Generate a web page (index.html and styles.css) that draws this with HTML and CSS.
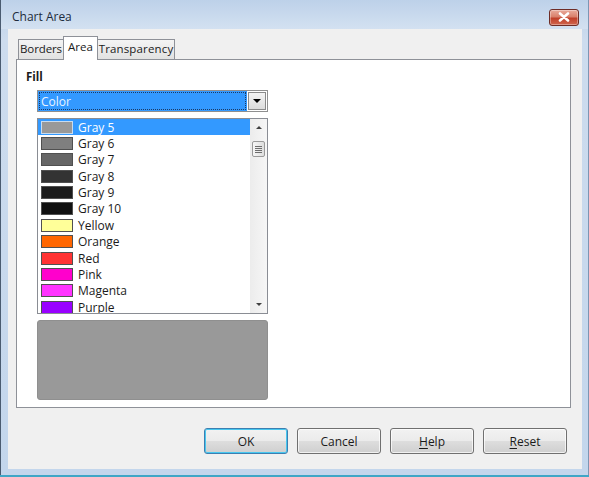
FILE: index.html
```html
<!DOCTYPE html>
<html>
<head>
<meta charset="utf-8">
<link rel="stylesheet" href="styles.css">
</head>
<body>
<div class="window">
  <div class="titlebar">
    <span class="title">Chart Area</span>
    <span class="close"><svg width="14" height="10" viewBox="0 0 14 10"><path d="M3 1.5 L11 8.5 M11 1.5 L3 8.5" stroke="#ffffff" stroke-width="2.6" stroke-linecap="round" fill="none"/></svg></span>
  </div>
  <div class="client">
    <div class="tabs">
      <div class="tab tab-borders">Borders</div>
      <div class="tab tab-area active">Area</div>
      <div class="tab tab-transp">Transparency</div>
    </div>
    <div class="panel">
      <div class="fill-label">Fill</div>
      <div class="indent">
        <div class="dropdown">
          <div class="dd-value"><span>Color</span></div>
          <div class="dd-btn"><span class="tri-down"></span></div>
        </div>
        <div class="listbox">
          <div class="rows">
            <div class="row selected"><span class="sw" style="background:#999999"></span>Gray 5</div>
            <div class="row"><span class="sw" style="background:#7f7f7f"></span>Gray 6</div>
            <div class="row"><span class="sw" style="background:#666666"></span>Gray 7</div>
            <div class="row"><span class="sw" style="background:#333333"></span>Gray 8</div>
            <div class="row"><span class="sw" style="background:#1c1c1c"></span>Gray 9</div>
            <div class="row"><span class="sw" style="background:#111111"></span>Gray 10</div>
            <div class="row"><span class="sw" style="background:#ffff99"></span>Yellow</div>
            <div class="row"><span class="sw" style="background:#ff6600"></span>Orange</div>
            <div class="row"><span class="sw" style="background:#ff3333"></span>Red</div>
            <div class="row"><span class="sw" style="background:#ff00cc"></span>Pink</div>
            <div class="row"><span class="sw" style="background:#ff33ff"></span>Magenta</div>
            <div class="row"><span class="sw" style="background:#9900ff"></span>Purple</div>
          </div>
          <div class="scrollbar">
            <div class="sb-arrow"><span class="tri-up"></span></div>
            <div class="sb-track">
              <div class="thumb"><i></i><i></i><i></i><i></i></div>
            </div>
            <div class="sb-arrow"><span class="tri-down small"></span></div>
          </div>
        </div>
        <div class="preview"></div>
      </div>
    </div>
    <div class="buttons">
      <div class="btn default">OK</div>
      <div class="btn">Cancel</div>
      <div class="btn"><u>H</u>elp</div>
      <div class="btn"><u>R</u>eset</div>
    </div>
  </div>
</div>
</body>
</html>
```

FILE: styles.css
```css
html, body {
  margin: 0;
  padding: 0;
}
body {
  width: 589px;
  height: 477px;
  overflow: hidden;
  background: #3fa6c6;
  font-family: "Open Sans", "Noto Sans", sans-serif;
  font-size: 11.5px;
  color: #1b1b1b;
}
.window {
  box-sizing: border-box;
  height: 475px;
  display: flex;
  flex-direction: column;
  background: linear-gradient(#bcd0e8 0px, #cddcee 40px, #c3d6ec 100%);
  border-left: 1px solid #4a5b70;
  border-right: 1px solid #7d96b3;
}
.titlebar {
  height: 29px;
  flex: none;
  display: flex;
  align-items: center;
  justify-content: space-between;
  padding: 0 9px 0 11px;
  background: linear-gradient(#bdd1e9, #d3e1f1);
}
.title {
  font-size: 12px;
  color: #1d2b3c;
  margin-top: 3px;
}
.close {
  width: 28px;
  height: 15px;
  margin-top: 5px;
  border: 1px solid #6e2d26;
  border-radius: 3px;
  background: linear-gradient(#e9ab9c 0%, #d9806b 45%, #c0402a 55%, #d0664e 100%);
  display: flex;
  align-items: center;
  justify-content: center;
  box-shadow: inset 0 0 0 1px rgba(255,255,255,0.35);
}
.close svg {
  display: block;
}
.client {
  flex: 1;
  margin: 0 6px 6px 7px;
  background: #f0f0f0;
  padding: 8px 11px 0 8px;
  display: flex;
  flex-direction: column;
}
.tabs {
  height: 22px;
  display: flex;
  align-items: flex-end;
  margin-left: 2px;
  position: relative;
  z-index: 1;
}
.tab {
  box-sizing: border-box;
  height: 20px;
  border: 1px solid #8e9198;
  border-bottom: none;
  background: linear-gradient(#f4f4f4, #e2e2e2);
  padding: 0;
  text-align: center;
  line-height: 18px;
  margin-left: -1px;
  white-space: nowrap;
}
.tab-borders {
  width: 46px;
  margin-left: 0;
  letter-spacing: -0.1px;
}
.tab-area {
  width: 35px;
}
.tab-transp {
  width: 78px;
  letter-spacing: 0.15px;
}
.tab.active {
  height: 24px;
  margin-bottom: -1px;
  background: #ffffff;
  line-height: 20px;
  position: relative;
}
.panel {
  box-sizing: border-box;
  height: 349px;
  flex: none;
  border: 1px solid #8e9198;
  background: #ffffff;
  padding: 9px 9px 0 9px;
}
.fill-label {
  font-weight: bold;
  font-size: 11.5px;
  line-height: 16px;
}
.indent {
  margin-left: 11px;
  width: 231px;
  margin-top: 5px;
}
.dropdown {
  box-sizing: border-box;
  height: 22px;
  display: flex;
  border: 1px solid #8f8f8f;
  background: #ffffff;
}
.dd-value {
  flex: 1;
  background: #3399ff;
  padding: 1px;
  display: flex;
}
.dd-value span {
  flex: 1;
  border: 1px dotted #1a3a66;
  color: #eaf4ff;
  padding-left: 1px;
  line-height: 17px;
  font-size: 12px;
}
.dd-btn {
  width: 16px;
  flex: none;
  margin: 1px;
  border: 1px solid #8a8a8a;
  background: linear-gradient(#f3f3f3, #dcdcdc);
  display: flex;
  align-items: center;
  justify-content: center;
}
.tri-down {
  width: 0;
  height: 0;
  border-left: 4px solid transparent;
  border-right: 4px solid transparent;
  border-top: 4px solid #000000;
}
.tri-down.small {
  border-left-width: 3px;
  border-right-width: 3px;
  border-top-width: 3px;
  border-top-color: #404040;
}
.tri-up {
  width: 0;
  height: 0;
  border-left: 3px solid transparent;
  border-right: 3px solid transparent;
  border-bottom: 3px solid #404040;
}
.listbox {
  box-sizing: border-box;
  margin-top: 6px;
  height: 196px;
  border: 1px solid #8a8d94;
  display: flex;
  overflow: hidden;
}
.rows {
  flex: 1;
  overflow: hidden;
}
.row {
  height: 16.36px;
  display: flex;
  align-items: center;
  font-size: 12px;
  white-space: nowrap;
}
.row.selected {
  background: #3399ff;
  color: #ffffff;
}
.sw {
  box-sizing: border-box;
  width: 32px;
  height: 13px;
  margin: 0 5px 0 3px;
  border: 1px solid #505050;
  flex: none;
}
.row.selected .sw {
  border-color: #c8dcf0;
}
.scrollbar {
  width: 17px;
  flex: none;
  background: linear-gradient(90deg, #ececec, #f6f6f6);
  display: flex;
  flex-direction: column;
}
.sb-arrow {
  height: 17px;
  display: flex;
  align-items: center;
  justify-content: center;
}
.sb-track {
  flex: 1;
  position: relative;
}
.thumb {
  box-sizing: border-box;
  margin: 5px 2px 0 2px;
  height: 16px;
  border: 1px solid #9a9a9a;
  border-radius: 2px;
  background: linear-gradient(90deg, #f6f6f6, #dedede);
  display: flex;
  flex-direction: column;
  justify-content: center;
  align-items: center;
  gap: 1px;
}
.thumb i {
  display: block;
  width: 7px;
  height: 1px;
  background: #6d6d6d;
}
.preview {
  box-sizing: border-box;
  margin-top: 6px;
  height: 80px;
  background: #999999;
  border: 1px solid #8f8f8f;
  border-radius: 3px;
}
.buttons {
  display: flex;
  justify-content: flex-end;
  gap: 9px;
  margin-top: 20px;
  margin-right: 4px;
}
.btn {
  box-sizing: border-box;
  width: 84px;
  height: 26px;
  border: 1px solid #707070;
  border-radius: 3px;
  background: linear-gradient(#f2f2f2 0%, #ebebeb 48%, #dddddd 52%, #cfcfcf 100%);
  display: flex;
  align-items: center;
  justify-content: center;
  font-size: 12px;
  color: #1b1b1b;
  box-shadow: inset 0 0 0 1px rgba(255,255,255,0.7);
}
.btn u {
  text-decoration: underline;
  text-underline-offset: 2px;
}
.btn.default {
  border-color: #3c7fb1;
  box-shadow: inset 0 0 0 1px #48c7ef;
}
```
